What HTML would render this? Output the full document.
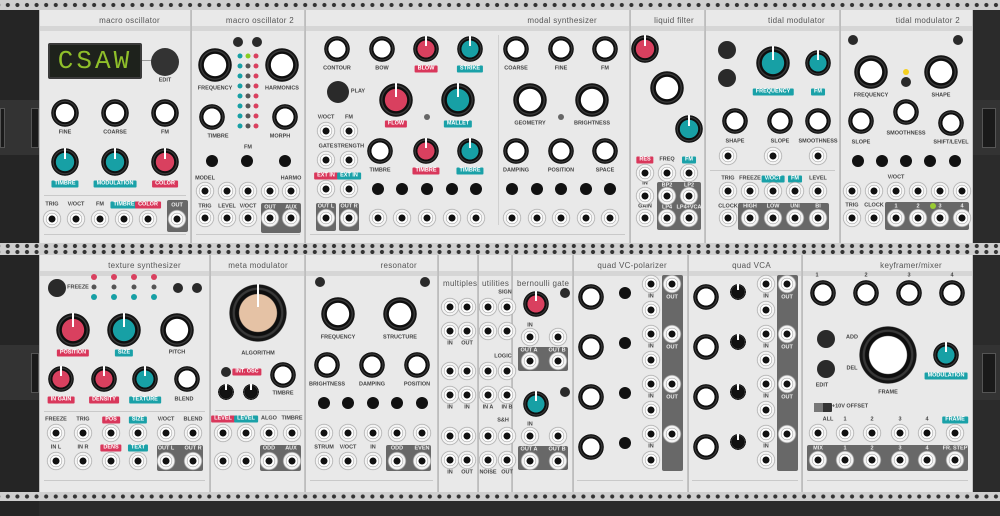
<!DOCTYPE html><html><head><meta charset="utf-8"><style>
*{margin:0;padding:0;box-sizing:border-box}
body{width:1000px;height:516px;overflow:hidden;background:#2b2b2b;position:relative;font-family:"Liberation Sans",sans-serif}
.a{position:absolute}
.rail{position:absolute;left:0;width:1000px;background:#cfcfcf;background-image:radial-gradient(circle,#333 0 1.8px,transparent 2.3px);background-size:9.6px 100%;background-position:3px 0}
.p{position:absolute;background:#e9e9e9;border-left:1px solid #bdbdbd;border-right:1px solid #c4c4c4}
.p::before{content:"";position:absolute;left:0;right:0;top:16px;height:5px;background:#d6d6d6}
.ti{position:absolute;top:6px;font-size:8px;color:#555;letter-spacing:.3px;white-space:nowrap}
.l{position:absolute;transform:translate(-50%,-50%);font-size:5.5px;font-weight:bold;color:#444;white-space:nowrap;font-style:normal;line-height:7px}
.t{color:#fff;padding:0 3px;border-radius:1px}
.r{background:#d9375b}.c{background:#1aa1a8}
.box{position:absolute;background:#686868;border-radius:2px}
.box .l{color:#eee}
.k,.j,.b,.d{position:absolute;border-radius:50%;transform:translate(-50%,-50%)}
.b{background:#2a2a2a}
.sep{position:absolute;height:1px;background:#c9c9c9}
.k i{position:absolute;left:50%;top:0;width:2px;margin-left:-1px;height:40%;background:#fff}
</style></head><body>
<div class="a" style="left:0;top:0;width:39px;height:516px;background:#252525"></div>
<div class="a" style="left:0;top:100px;width:39px;height:55px;background:#333"></div>
<div class="a" style="left:0;top:345px;width:39px;height:55px;background:#333"></div>
<div class="a" style="left:973px;top:100px;width:27px;height:55px;background:#333"></div>
<div class="a" style="left:973px;top:345px;width:27px;height:55px;background:#333"></div>
<div class="a" style="left:982px;top:108px;width:14px;height:40px;background:#1a1a1a;border:1px solid #555"></div>
<div class="a" style="left:982px;top:353px;width:14px;height:40px;background:#1a1a1a;border:1px solid #555"></div>
<div class="a" style="left:0;top:108px;width:5px;height:40px;background:#1a1a1a;border:1px solid #555"></div>
<div class="a" style="left:31px;top:108px;width:8px;height:40px;background:#1a1a1a;border:1px solid #555"></div>
<div class="a" style="left:31px;top:353px;width:8px;height:40px;background:#1a1a1a;border:1px solid #555"></div>
<div class="rail" style="top:0;height:10px"></div>
<div class="rail" style="top:243px;height:6px"></div>
<div class="rail" style="top:249px;height:6px"></div>
<div class="rail" style="top:492px;height:9px"></div>

<div class="p" style="left:39px;top:10px;width:152px;height:233px"><span class="ti" style="right:30px">macro oscillator</span></div>
<div class="p" style="left:191px;top:10px;width:114px;height:233px"><span class="ti" style="right:10px">macro oscillator 2</span></div>
<div class="p" style="left:305px;top:10px;width:325px;height:233px"><span class="ti" style="right:32px">modal synthesizer</span></div>
<div class="p" style="left:630px;top:10px;width:75px;height:233px"><span class="ti" style="right:10px">liquid filter</span></div>
<div class="p" style="left:705px;top:10px;width:135px;height:233px"><span class="ti" style="right:14px">tidal modulator</span></div>
<div class="p" style="left:840px;top:10px;width:133px;height:233px"><span class="ti" style="right:12px">tidal modulator 2</span></div>
<div class="p" style="left:39px;top:255px;width:171px;height:237px"><span class="ti" style="right:28px">texture synthesizer</span></div>
<div class="p" style="left:210px;top:255px;width:95px;height:237px"><span class="ti" style="right:16px">meta modulator</span></div>
<div class="p" style="left:305px;top:255px;width:133px;height:237px"><span class="ti" style="right:20px">resonator</span></div>
<div class="p" style="left:438px;top:255px;width:40px;height:237px"><span class="ti" style="left:4px;top:24px">multiples</span></div>
<div class="p" style="left:478px;top:255px;width:34px;height:237px"><span class="ti" style="left:3px;top:24px">utilities</span></div>
<div class="p" style="left:512px;top:255px;width:61px;height:237px"><span class="ti" style="left:4px;top:24px">bernoulli gate</span></div>
<div class="p" style="left:573px;top:255px;width:115px;height:237px"><span class="ti" style="right:20px">quad VC-polarizer</span></div>
<div class="p" style="left:688px;top:255px;width:114px;height:237px"><span class="ti" style="right:30px">quad VCA</span></div>
<div class="p" style="left:802px;top:255px;width:171px;height:237px"><span class="ti" style="right:30px">keyframer/mixer</span></div>

<div class="sep" style="left:44px;top:195px;width:142px"></div><div class="sep" style="left:44px;top:234px;width:142px"></div>
<div class="sep" style="left:196px;top:234px;width:104px"></div><div class="sep" style="left:310px;top:234px;width:315px"></div>
<div class="sep" style="left:710px;top:170px;width:125px"></div><div class="sep" style="left:44px;top:411px;width:161px"></div>
<div class="sep" style="left:44px;top:480px;width:161px"></div><div class="sep" style="left:215px;top:410px;width:85px"></div>
<div class="sep" style="left:310px;top:480px;width:123px"></div><div class="sep" style="left:577px;top:480px;width:106px"></div>
<div class="sep" style="left:692px;top:480px;width:106px"></div><div class="sep" style="left:807px;top:480px;width:161px"></div>
<div class="a" style="left:498px;top:35px;width:1px;height:190px;background:#d0d0d0"></div>

<div class="box" style="left:167px;top:200px;width:21px;height:32px"><i class="l" style="left:10px;top:6px">OUT</i></div>
<div class="box" style="left:261px;top:203px;width:40px;height:30px"><i class="l" style="left:9px;top:5px">OUT</i><i class="l" style="left:30px;top:5px">AUX</i></div>
<div class="box" style="left:316px;top:203px;width:20px;height:28px"><i class="l" style="left:10px;top:4px">OUT L</i></div>
<div class="box" style="left:339px;top:203px;width:20px;height:28px"><i class="l" style="left:10px;top:4px">OUT R</i></div>
<div class="box" style="left:657px;top:182px;width:44px;height:48px"><i class="l" style="left:10px;top:4px">BP2</i><i class="l" style="left:32px;top:4px">LP2</i><i class="l" style="left:10px;top:26px">LP4</i><i class="l" style="left:32px;top:26px">LP4+VCA</i></div>
<div class="box" style="left:738px;top:203px;width:91px;height:27px"><i class="l" style="left:12px;top:4px">HIGH</i><i class="l" style="left:35px;top:4px">LOW</i><i class="l" style="left:57px;top:4px">UNI</i><i class="l" style="left:80px;top:4px">BI</i></div>
<div class="box" style="left:885px;top:202px;width:84px;height:28px"><i class="l" style="left:11px;top:5px">1</i><i class="l" style="left:33px;top:5px">2</i><i class="l" style="left:55px;top:5px">3</i><i class="l" style="left:77px;top:5px">4</i></div>
<div class="box" style="left:157px;top:445px;width:46px;height:26px"><i class="l" style="left:9px;top:4px">OUT L</i><i class="l" style="left:36px;top:4px">OUT R</i></div>
<div class="box" style="left:260px;top:445px;width:41px;height:26px"><i class="l" style="left:9px;top:4px">ODD</i><i class="l" style="left:31px;top:4px">AUX</i></div>
<div class="box" style="left:386px;top:445px;width:45px;height:26px"><i class="l" style="left:11px;top:4px">ODD</i><i class="l" style="left:36px;top:4px">EVEN</i></div>
<div class="box" style="left:518px;top:347px;width:50px;height:24px"><i class="l" style="left:11px;top:4px">OUT A</i><i class="l" style="left:39px;top:4px">OUT B</i></div>
<div class="box" style="left:518px;top:446px;width:50px;height:24px"><i class="l" style="left:11px;top:4px">OUT A</i><i class="l" style="left:39px;top:4px">OUT B</i></div>
<div class="box" style="left:662px;top:275px;width:21px;height:196px"></div>
<div class="box" style="left:777px;top:275px;width:21px;height:196px"></div>
<div class="box" style="left:807px;top:445px;width:161px;height:26px"><i class="l" style="left:11px;top:4px">MIX</i><i class="l" style="left:38px;top:4px">1</i><i class="l" style="left:65px;top:4px">2</i><i class="l" style="left:93px;top:4px">3</i><i class="l" style="left:120px;top:4px">4</i><i class="l" style="left:148px;top:4px">FR. STEP</i></div>

<div class="a" style="left:48px;top:43px;width:94px;height:36px;background:#1e221c;border:2px solid #3a3a3a;border-radius:2px;color:#8fbf2a;font:26px 'Liberation Mono',monospace;letter-spacing:3px;text-align:center;line-height:32px">CSAW</div>
<div class="a" style="left:142px;top:60px;width:10px;height:1px;background:#999"></div>

<div id="g"></div>

<i class="l" style="left:165px;top:81px">EDIT</i>
<i class="l" style="left:65px;top:133px">FINE</i><i class="l" style="left:115px;top:133px">COARSE</i><i class="l" style="left:165px;top:133px">FM</i>
<i class="l t c" style="left:65px;top:184px">TIMBRE</i><i class="l t c" style="left:115px;top:184px">MODULATION</i><i class="l t r" style="left:165px;top:184px">COLOR</i>
<i class="l" style="left:52px;top:205px">TRIG</i><i class="l" style="left:76px;top:205px">V/OCT</i><i class="l" style="left:100px;top:205px">FM</i><i class="l t c" style="left:124px;top:205px">TIMBRE</i><i class="l t r" style="left:148px;top:205px">COLOR</i>
<i class="l" style="left:215px;top:89px">FREQUENCY</i><i class="l" style="left:282px;top:89px">HARMONICS</i>
<i class="l" style="left:218px;top:137px">TIMBRE</i><i class="l" style="left:280px;top:137px">MORPH</i><i class="l" style="left:248px;top:148px">FM</i>
<i class="l" style="left:205px;top:179px">MODEL</i><i class="l" style="left:291px;top:179px">HARMO</i>
<i class="l" style="left:205px;top:207px">TRIG</i><i class="l" style="left:227px;top:207px">LEVEL</i><i class="l" style="left:248px;top:207px">V/OCT</i>
<i class="l" style="left:337px;top:69px">CONTOUR</i><i class="l" style="left:382px;top:69px">BOW</i><i class="l t r" style="left:426px;top:69px">BLOW</i><i class="l t c" style="left:470px;top:69px">STRIKE</i>
<i class="l" style="left:516px;top:69px">COARSE</i><i class="l" style="left:561px;top:69px">FINE</i><i class="l" style="left:605px;top:69px">FM</i>
<i class="l" style="left:358px;top:92px">PLAY</i>
<i class="l t r" style="left:396px;top:124px">FLOW</i><i class="l t c" style="left:458px;top:124px">MALLET</i><i class="l" style="left:530px;top:124px">GEOMETRY</i><i class="l" style="left:592px;top:124px">BRIGHTNESS</i>
<i class="l" style="left:326px;top:118px">V/OCT</i><i class="l" style="left:349px;top:118px">FM</i><i class="l" style="left:326px;top:147px">GATE</i><i class="l" style="left:349px;top:147px">STRENGTH</i>
<i class="l t r" style="left:326px;top:176px">EXT IN</i><i class="l t c" style="left:349px;top:176px">EXT IN</i>
<i class="l" style="left:380px;top:171px">TIMBRE</i><i class="l t r" style="left:426px;top:171px">TIMBRE</i><i class="l t c" style="left:470px;top:171px">TIMBRE</i><i class="l" style="left:516px;top:171px">DAMPING</i><i class="l" style="left:561px;top:171px">POSITION</i><i class="l" style="left:605px;top:171px">SPACE</i>
<i class="l t r" style="left:645px;top:160px">RES</i><i class="l" style="left:667px;top:160px">FREQ</i><i class="l t c" style="left:689px;top:160px">FM</i>
<i class="l" style="left:645px;top:184px">IN</i><i class="l" style="left:645px;top:207px">GAIN</i>
<i class="l t c" style="left:773px;top:92px">FREQUENCY</i><i class="l t c" style="left:818px;top:92px">FM</i>
<i class="l" style="left:735px;top:142px">SHAPE</i><i class="l" style="left:780px;top:142px">SLOPE</i><i class="l" style="left:818px;top:142px">SMOOTHNESS</i>
<i class="l" style="left:728px;top:179px">TRIG</i><i class="l" style="left:750px;top:179px">FREEZE</i><i class="l t c" style="left:773px;top:179px">V/OCT</i><i class="l t c" style="left:795px;top:179px">FM</i><i class="l" style="left:818px;top:179px">LEVEL</i><i class="l" style="left:728px;top:207px">CLOCK</i>
<i class="l" style="left:871px;top:96px">FREQUENCY</i><i class="l" style="left:941px;top:96px">SHAPE</i><i class="l" style="left:906px;top:134px">SMOOTHNESS</i><i class="l" style="left:861px;top:143px">SLOPE</i><i class="l" style="left:951px;top:143px">SHIFT/LEVEL</i>
<i class="l" style="left:896px;top:178px">V/OCT</i><i class="l" style="left:852px;top:206px">TRIG</i><i class="l" style="left:874px;top:206px">CLOCK</i>
<i class="l" style="left:78px;top:288px">FREEZE</i>
<i class="l t r" style="left:73px;top:353px">POSITION</i><i class="l t c" style="left:124px;top:353px">SIZE</i><i class="l" style="left:177px;top:353px">PITCH</i>
<i class="l t r" style="left:61px;top:400px">IN GAIN</i><i class="l t r" style="left:104px;top:400px">DENSITY</i><i class="l t c" style="left:145px;top:400px">TEXTURE</i><i class="l" style="left:184px;top:400px">BLEND</i>
<i class="l" style="left:56px;top:420px">FREEZE</i><i class="l" style="left:83px;top:420px">TRIG</i><i class="l t r" style="left:111px;top:420px">POS</i><i class="l t c" style="left:138px;top:420px">SIZE</i><i class="l" style="left:166px;top:420px">V/OCT</i><i class="l" style="left:193px;top:420px">BLEND</i>
<i class="l" style="left:56px;top:448px">IN L</i><i class="l" style="left:83px;top:448px">IN R</i><i class="l t r" style="left:111px;top:448px">DENS</i><i class="l t c" style="left:138px;top:448px">TEXT</i>
<i class="l" style="left:258px;top:354px">ALGORITHM</i><i class="l t r" style="left:247px;top:372px">INT. OSC</i><i class="l" style="left:283px;top:394px">TIMBRE</i>
<i class="l t r" style="left:223px;top:419px">LEVEL</i><i class="l t c" style="left:246px;top:419px">LEVEL</i><i class="l" style="left:269px;top:419px">ALGO</i><i class="l" style="left:292px;top:419px">TIMBRE</i>
<i class="l" style="left:338px;top:338px">FREQUENCY</i><i class="l" style="left:400px;top:338px">STRUCTURE</i>
<i class="l" style="left:327px;top:385px">BRIGHTNESS</i><i class="l" style="left:372px;top:385px">DAMPING</i><i class="l" style="left:417px;top:385px">POSITION</i>
<i class="l" style="left:324px;top:448px">STRUM</i><i class="l" style="left:348px;top:448px">V/OCT</i><i class="l" style="left:373px;top:448px">IN</i>
<i class="l" style="left:450px;top:344px">IN</i><i class="l" style="left:467px;top:344px">OUT</i><i class="l" style="left:450px;top:408px">IN</i><i class="l" style="left:467px;top:408px">IN</i><i class="l" style="left:450px;top:473px">IN</i><i class="l" style="left:467px;top:473px">OUT</i>
<i class="l" style="left:505px;top:293px">SIGN</i><i class="l" style="left:503px;top:357px">LOGIC</i><i class="l" style="left:503px;top:421px">S&amp;H</i>
<i class="l" style="left:488px;top:408px">IN A</i><i class="l" style="left:507px;top:408px">IN B</i><i class="l" style="left:488px;top:473px">NOISE</i><i class="l" style="left:507px;top:473px">OUT</i>
<i class="l" style="left:530px;top:326px">IN</i><i class="l" style="left:530px;top:425px">IN</i>
<i class="l" style="left:817px;top:276px">1</i><i class="l" style="left:866px;top:276px">2</i><i class="l" style="left:909px;top:276px">3</i><i class="l" style="left:952px;top:276px">4</i>
<i class="l" style="left:852px;top:338px">ADD</i><i class="l" style="left:852px;top:369px">DEL</i><i class="l" style="left:822px;top:386px">EDIT</i>
<i class="l" style="left:888px;top:393px">FRAME</i><i class="l t c" style="left:946px;top:376px">MODULATION</i>
<i class="l" style="left:850px;top:407px">+10V OFFSET</i>
<i class="l" style="left:828px;top:420px">ALL</i><i class="l" style="left:845px;top:420px">1</i><i class="l" style="left:872px;top:420px">2</i><i class="l" style="left:900px;top:420px">3</i><i class="l" style="left:927px;top:420px">4</i><i class="l t c" style="left:955px;top:420px">FRAME</i>
<div class="a" style="left:814px;top:403px;width:18px;height:9px;background:#333;border-radius:1px"></div>
<div class="a" style="left:814px;top:403px;width:9px;height:9px;background:#777"></div>

<script>
var g=document.getElementById('g'),H='';
function K(x,y,r,c){c=c||'#fff';H+='<div class="k" style="left:'+x+'px;top:'+y+'px;width:'+2*r+'px;height:'+2*r+'px;background:radial-gradient(circle closest-side,'+c+' 0 64%,#0e0e0e 67% 78%,#383838 81% 86%,#151515 89% 97%,transparent 100%);z-index:2">'+(c=='#fff'?'':'<i></i>')+'</div>';}
function J(x,y){H+='<div class="j" style="left:'+x+'px;top:'+y+'px;width:19px;height:19px;background:radial-gradient(circle closest-side,#111 0 34%,#fff 39% 56%,#999 61%,#f4f4f4 67% 84%,#aaa 91%,transparent 100%);z-index:2"></div>';}
function B(x,y,r,c){H+='<div class="b" style="left:'+x+'px;top:'+y+'px;width:'+2*r+'px;height:'+2*r+'px;'+(c?'background:'+c:'')+';z-index:2"></div>';}
function T(x,y){B(x,y,6,'#111');}
var W='#fff',R='#d9405f',C='#17a0a5';
B(165,62,14,'#333');K(65,113,14,W);K(115,113,14,W);K(165,113,14,W);K(65,162,14,C);K(115,162,14,C);K(165,162,14,R);
[52,76,100,124,148].forEach(x=>J(x,219));J(177,219);
B(238,42,5);B(257,42,5);K(215,65,17,W);K(282,65,17,W);K(212,117,13,W);K(285,117,13,W);
for(var i=0;i<8;i++){B(240,56+i*10,2.5,C);B(248,56+i*10,2.5,i?'#555':'#8c2');B(256,56+i*10,2.5,R);}
T(212,161);T(247,161);T(285,161);
[205,227,248,270,291].forEach(x=>J(x,191));[205,227,248,270,291].forEach(x=>J(x,218));
K(337,49,13,W);K(382,49,13,W);K(426,49,13,R);K(470,49,13,C);K(516,49,13,W);K(561,49,13,W);K(605,49,13,W);
B(338,92,11,'#2a2a2a');K(396,100,17,R);K(458,100,17,C);K(530,100,17,W);K(592,100,17,W);B(427,117,3,'#666');B(561,117,3,'#666');
J(326,131);J(349,131);J(326,160);J(349,160);J(326,189);J(349,189);J(326,218);J(349,218);
K(380,151,13,W);K(426,151,13,R);K(470,151,13,C);K(516,151,13,W);K(561,151,13,W);K(605,151,13,W);
[378,402,427,452,476,512,537,561,586,610].forEach(x=>{T(x,189);J(x,218)});
K(645,49,14,R);K(667,88,17,W);K(689,129,14,C);J(645,173);J(667,173);J(689,173);J(645,196);J(645,218);J(667,196);J(689,196);J(667,218);J(689,218);
B(727,50,9,'#2a2a2a');B(727,78,9,'#2a2a2a');K(773,63,17,C);K(818,63,13,C);K(735,121,13,W);K(780,121,13,W);K(818,121,13,W);
J(728,156);J(773,156);J(818,156);[728,750,773,795,818].forEach(x=>J(x,191));[728,750,773,795,818].forEach(x=>J(x,218));
B(853,40,5);B(958,40,5);B(906,82,5);B(906,72,3,'#f5d020');K(871,72,17,W);K(941,72,17,W);K(906,112,13,W);K(861,121,13,W);K(951,123,13,W);
[858,882,906,930,955].forEach(x=>T(x,161));[852,874,896,918,940,962].forEach(x=>J(x,191));[852,874,896,918,940,962].forEach(x=>J(x,218));
B(933,206,3,'#9c3');
B(57,288,9);[94,114,134,154].forEach(x=>{B(x,277,3,R);B(x,287,2.5,'#555');B(x,297,3,C)});B(178,288,5);B(197,288,5);
K(73,330,17,R);K(124,330,17,C);K(177,330,17,W);K(61,379,13,R);K(104,379,13,R);K(145,379,13,C);K(187,379,13,W);
[56,83,111,138,166,193].forEach(x=>J(x,433));[56,83,111,138,166,193].forEach(x=>J(x,461));
K(258,313,29,'#e5c2a5');B(226,372,5);K(226,392,8,'#111');K(251,392,8,'#111');K(283,375,13,W);
[223,246,269,292].forEach(x=>{J(x,433);J(x,461)});
B(320,282,5);B(425,282,5);K(338,314,17,W);K(400,314,17,W);K(327,365,13,W);K(372,365,13,W);K(417,365,13,W);
[324,348,373,397,422].forEach(x=>{T(x,403);J(x,433);J(x,461)});
[307,331,371,395,436,460].forEach(y=>{J(450,y);J(467,y);J(488,y);J(507,y)});
K(536,304,13,R);B(565,293,5);J(530,337);J(558,337);J(530,361);J(558,361);K(536,404,13,C);B(565,392,5);J(530,436);J(558,436);J(530,461);J(558,461);
[297,347,397,447].forEach(y=>{K(591,y,13,W);T(625,y-4);J(651,y-13);J(651,y+13);J(672,y-13);K(706,y,13,W);K(738,y-5,8,'#111');J(766,y-13);J(766,y+13);J(787,y-13)});
[823,866,909,952].forEach(x=>K(x,293,13,W));B(826,339,9,'#2a2a2a');B(826,369,9,'#2a2a2a');K(888,355,29,W);K(946,355,13,C);
[818,845,872,900,927,955].forEach(x=>{J(x,433);J(x,460)});
g.innerHTML=H;
</script>
<i class="l" style="left:651px;top:297px">IN</i><i class="l" style="left:651px;top:347px">IN</i><i class="l" style="left:651px;top:397px">IN</i><i class="l" style="left:651px;top:447px">IN</i>
<i class="l" style="left:766px;top:297px">IN</i><i class="l" style="left:766px;top:347px">IN</i><i class="l" style="left:766px;top:397px">IN</i><i class="l" style="left:766px;top:447px">IN</i>
<i class="l" style="left:672px;top:298px;color:#eee">OUT</i><i class="l" style="left:672px;top:348px;color:#eee">OUT</i><i class="l" style="left:672px;top:398px;color:#eee">OUT</i><i class="l" style="left:787px;top:298px;color:#eee">OUT</i><i class="l" style="left:787px;top:348px;color:#eee">OUT</i><i class="l" style="left:787px;top:398px;color:#eee">OUT</i>
</body></html>
